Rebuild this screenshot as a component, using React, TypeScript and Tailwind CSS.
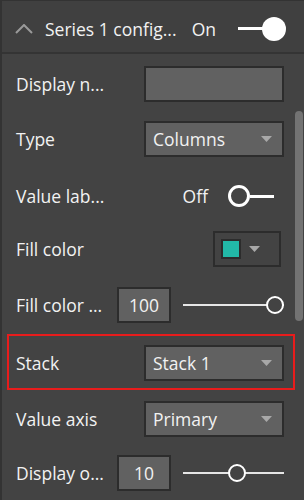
import React from 'react';

function Caret() {
  return (
    <svg width="11" height="6" viewBox="0 0 11 6" className="shrink-0">
      <path d="M0 0h11L5.5 6z" fill="#a8a8a8" />
    </svg>
  );
}

function Dropdown({ value }: { value: string }) {
  return (
    <div className="ml-auto flex h-9 w-[140px] items-center justify-between border-2 border-[#2c2c2c] bg-[#616161] pl-[7px] pr-[10px]">
      <span>{value}</span>
      <Caret />
    </div>
  );
}

function NumberBox({ value }: { value: string }) {
  return (
    <div className="flex h-9 w-[54px] shrink-0 items-center justify-center border-2 border-[#2c2c2c] bg-[#616161]">
      {value}
    </div>
  );
}

function Slider({ pos }: { pos: number }) {
  // pos is the thumb centre in px from the track start
  return (
    <div className="relative ml-[12px] h-5 w-[101px]">
      <div className="absolute left-0 right-0 top-[9px] h-[2px] bg-[#e6e6e6]" />
      <div
        className="absolute top-[1px] h-[18px] w-[18px] rounded-full border-2 border-white bg-[#434343]"
        style={{ left: pos - 9 }}
      />
    </div>
  );
}

function Row({ label, children, className = '' }: { label: string; children?: React.ReactNode; className?: string }) {
  return (
    <div className={`flex h-9 items-center pl-[14px] ${className}`}>
      <span className="w-[101px] shrink-0 whitespace-nowrap">{label}</span>
      {children}
    </div>
  );
}

export default function App() {
  return (
    <div className="relative h-[500px] w-[304px] overflow-hidden border-l-2 border-t border-[#333333] bg-[#434343] font-['Open_Sans',sans-serif] text-[17.5px] text-[#f2f2f2]">
      {/* Header */}
      <div className="flex h-[53px] items-center border-b-2 border-[#343434] bg-[#404040] pl-[13px] pt-[5px]">
        <svg width="20" height="10" viewBox="0 0 20 10" className="shrink-0">
          <path d="M1 9l8-8 8 8" fill="none" stroke="#9a9a9a" strokeWidth="2" />
        </svg>
        <span className="ml-[10px] whitespace-nowrap">Series 1 config...</span>
        <span className="ml-auto">On</span>
        <div className="relative ml-[22px] mr-[18px] h-6 w-[48px]">
          <div className="absolute left-0 top-[10px] h-[3px] w-[30px] bg-white" />
          <div className="absolute right-0 top-0 h-6 w-6 rounded-full bg-white" />
        </div>
      </div>

      {/* Body */}
      <div className="flex flex-col">
        <Row label="Display n..." className="mt-[12px] pr-[20px]">
          <div className="ml-auto h-9 w-[140px] border-2 border-[#2c2c2c] bg-[#616161]" />
        </Row>

        <Row label="Type" className="mt-[19px] pr-[20px]">
          <Dropdown value="Columns" />
        </Row>

        <Row label="Value lab..." className="mt-[21px] pr-[30px]">
          <span className="ml-auto">Off</span>
          <div className="relative ml-[20px] h-[22px] w-[46px]">
            <div className="absolute left-0 top-0 h-[22px] w-[22px] rounded-full border-[3px] border-white" />
            <div className="absolute right-0 top-[10px] h-[2.5px] w-[24px] bg-white" />
          </div>
        </Row>

        <Row label="Fill color" className="mt-[17px] pr-[23px]">
          <div className="ml-auto flex h-9 w-[68px] items-center border-2 border-[#2c2c2c] bg-[#434343] pl-[6px]">
            <div className="h-5 w-5 border-2 border-[#2c2c2c] bg-[#22b9a8]" />
            <div className="ml-[8px]">
              <Caret />
            </div>
          </div>
        </Row>

        <Row label="Fill color ..." className="mt-[20px] pr-[20px]">
          <NumberBox value="100" />
          <Slider pos={92} />
        </Row>

        <div className="ml-[5px] mr-[9px] mt-[11px] border-2 border-[#e81c1c] pb-[7px] pt-[9px]">
          <Row label="Stack" className="-ml-[7px] -mr-[11px] pr-[20px]">
            <Dropdown value="Stack 1" />
          </Row>
        </div>

        <Row label="Value axis" className="mt-[11px] pr-[20px]">
          <Dropdown value="Primary" />
        </Row>

        <Row label="Display o..." className="mt-[18px] pr-[20px]">
          <NumberBox value="10" />
          <Slider pos={54} />
        </Row>
      </div>

      {/* Scrollbar */}
      <div className="absolute right-[1px] top-[110px] h-[210px] w-[8px] rounded-full bg-[#737373]" />
    </div>
  );
}
